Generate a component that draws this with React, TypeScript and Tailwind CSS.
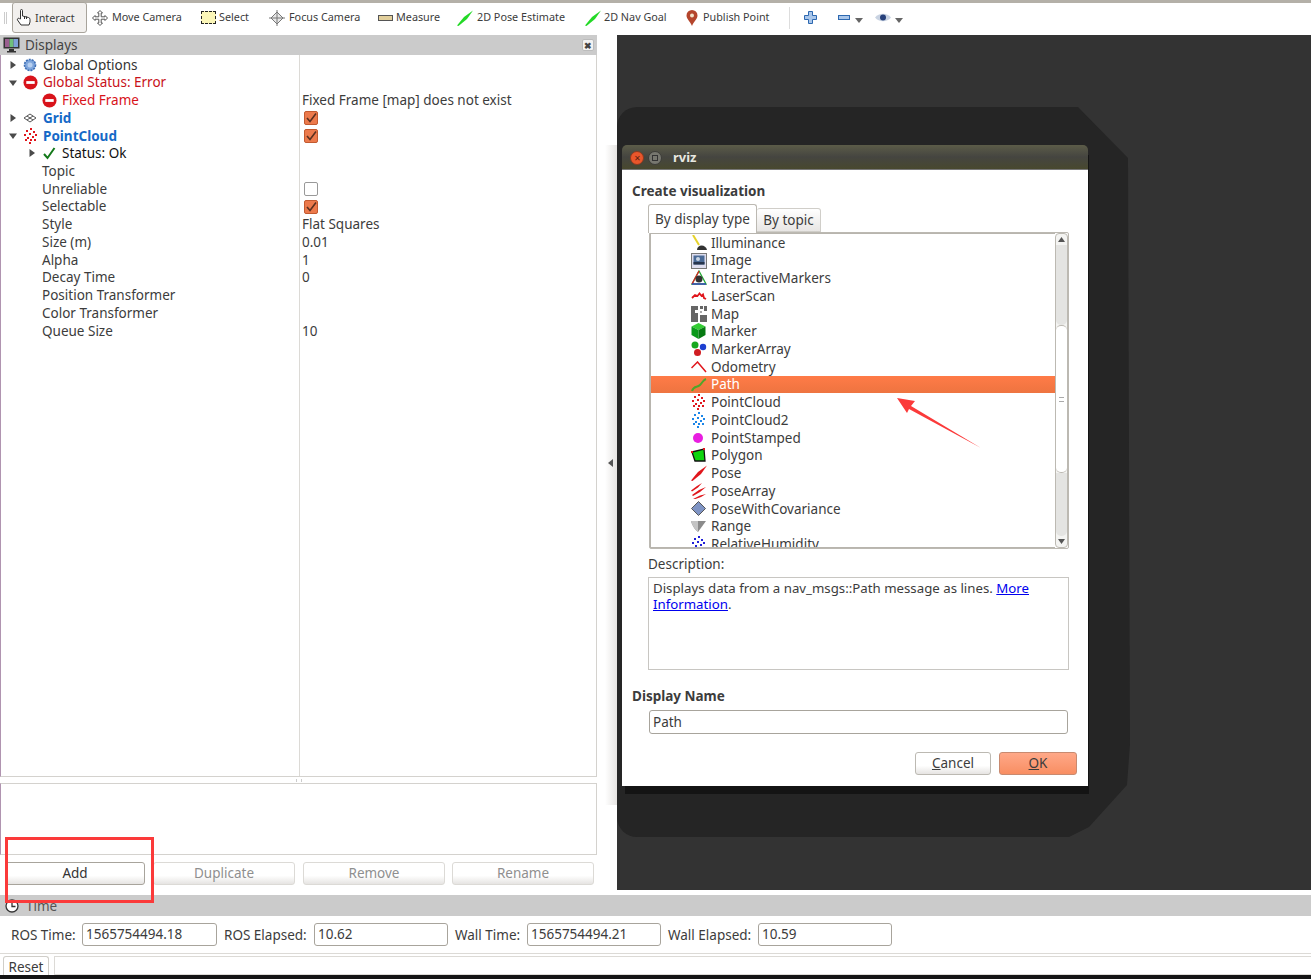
import React from "react";

const FONT = "font-['Noto_Sans',sans-serif]";

// ---- icons ----
function Dots({ color }: { color: string }) {
  const pts = [[8,1],[4,3],[11,4],[2,7],[7,6],[13,7],[5,10],[10,9],[3,12],[8,12],[12,12],[7,15]];
  return (
    <svg width="16" height="16" viewBox="0 0 16 16">
      {pts.map(([x, y], i) => <rect key={i} x={x - 1} y={y - 1} width="2" height="2" fill={color} />)}
    </svg>
  );
}

function StopIcon() {
  return (
    <svg width="15" height="15" viewBox="0 0 16 16">
      <circle cx="8" cy="8" r="7.5" fill="#d8131b" />
      <rect x="3.5" y="6.5" width="9" height="3" fill="#fff" />
    </svg>
  );
}

function GearIcon() {
  return (
    <svg width="14" height="14" viewBox="0 0 14 14">
      <circle cx="7" cy="7" r="5.5" fill="#7fa6dc" stroke="#3e6fb5" strokeWidth="1.6" strokeDasharray="2 1" />
      <circle cx="7" cy="7" r="2.5" fill="#b8d0f0" />
    </svg>
  );
}

function GridIcon() {
  return (
    <svg width="14" height="10" viewBox="0 0 14 10" fill="none" stroke="#555" strokeWidth="1">
      <path d="M7 1 13 5 7 9 1 5Z" />
      <path d="M4 3 10 7M10 3 4 7" />
    </svg>
  );
}

function CheckMark() {
  return (
    <svg width="14" height="14" viewBox="0 0 14 14" fill="none">
      <path d="M2 8 5.5 12 12.5 2" stroke="#14791a" strokeWidth="2" />
    </svg>
  );
}

function Arrow({ open }: { open?: boolean }) {
  return (
    <svg width="8" height="8" viewBox="0 0 8 8">
      <path d={open ? "M0 1.5H8L4 7Z" : "M1.5 0V8L7 4Z"} fill="#4a4a4a" />
    </svg>
  );
}

function OrangeCheck() {
  return (
    <div className="w-[14px] h-[14px] rounded-[2px] bg-[#ec7a4c] border border-[#c25a30] flex items-center justify-center">
      <svg width="12" height="12" viewBox="0 0 12 12" fill="none">
        <path d="M2 6 5 9.5 11 1.5" stroke="#5a3020" strokeWidth="1.6" />
      </svg>
    </div>
  );
}

function Slash({ color }: { color: string }) {
  return (
    <svg width="16" height="16" viewBox="0 0 16 16">
      <path d="M0 15.500 7 7 16 .5 10 9 1.500 16Z" fill={color} />
    </svg>
  );
}

// ---- toolbar ----
const HandIcon = () => (
  <svg width="16" height="18" viewBox="0 0 16 18" fill="none" stroke="#333" strokeWidth="1">
    <path d="M4.5 11V2.5a1 1 0 0 1 2 0V8l6 1.5a2 2 0 0 1 1.5 2V14l-1 3H5L1.5 12a1.2 1.2 0 0 1 2-1.3Z" fill="#fff" />
    <path d="M8.5 8v3M10.5 8.5V11" />
  </svg>
);
const MoveIcon = () => (
  <svg width="16" height="16" viewBox="0 0 16 16" fill="#fff" stroke="#555" strokeWidth="1">
    <path d="M8 .5 10.5 3H9.2V6.8H13V5.5L15.5 8 13 10.5V9.2H9.2V13h1.3L8 15.5 5.5 13h1.3V9.2H3v1.3L.5 8 3 5.5v1.3h3.8V3H5.500Z" />
  </svg>
);
const SelectIcon = () => (
  <div className="w-[15px] h-[13px] bg-[#fbf6b8] border border-dashed border-[#222]" />
);
const FocusIcon = () => (
  <svg width="16" height="16" viewBox="0 0 16 16" fill="none" stroke="#777" strokeWidth="1">
    <path d="M8 2 14 8 8 14 2 8Z" fill="#e8e8e8" />
    <path d="M8 0v16M0 8h16" />
  </svg>
);
const MeasureIcon = () => (
  <div className="w-[15px] h-[6px] bg-[#e2cf9b] border border-[#555]" />
);
const PinIcon = () => (
  <svg width="12" height="16" viewBox="0 0 12 16">
    <path d="M6 16C4 11 .5 9 .5 5.5a5.5 5.5 0 0 1 11 0C11.500 9 8 11 6 16Z" fill="#b4452c" />
    <circle cx="6" cy="5.500" r="2" fill="#f3e3c8" />
  </svg>
);
const Caret = () => (
  <svg width="8" height="5" viewBox="0 0 8 5"><path d="M0 0H8L4 5Z" fill="#666" /></svg>
);

function Tool({ icon, label, w, gap }: { icon: React.ReactNode; label: string; w: string; gap: string }) {
  return (
    <div className={`flex items-center h-full ${w} ${gap}`}>
      <span className="flex items-center justify-center w-[16px] shrink-0">{icon}</span>
      <span className="text-[10.800px] text-[#3c3c3c] whitespace-nowrap">{label}</span>
    </div>
  );
}

function Toolbar() {
  return (
    <div className="h-[35px] shrink-0 bg-white border-t-[3px] border-[#b4b0a8] flex items-center pl-[4px] pb-[3px]">
      <div className="w-[3px] h-[12px] mr-[5px] border-x border-[#ccc]" />
      <div className="w-[75px] h-[31px] -mt-[1px] rounded-[3px] border border-[#a8a49c] bg-[#f2f0ee] flex items-center pl-[3px] gap-[3px] mr-[5px]">
        <HandIcon />
        <span className="text-[10.800px] text-[#3c3c3c] mt-[2px]">Interact</span>
      </div>
      <Tool icon={<MoveIcon />} label="Move Camera" w="w-[108px]" gap="gap-[4px]" />
      <Tool icon={<SelectIcon />} label="Select" w="w-[69px]" gap="gap-[3px]" />
      <Tool icon={<FocusIcon />} label="Focus Camera" w="w-[108px]" gap="gap-[4px]" />
      <Tool icon={<MeasureIcon />} label="Measure" w="w-[80px]" gap="gap-[3px]" />
      <Tool icon={<Slash color="#23d926" />} label="2D Pose Estimate" w="w-[128px]" gap="gap-[4px]" />
      <Tool icon={<Slash color="#23d926" />} label="2D Nav Goal" w="w-[99px]" gap="gap-[3px]" />
      <Tool icon={<PinIcon />} label="Publish Point" w="w-[105px]" gap="gap-[3px]" />
      <div className="w-px h-[22px] bg-[#ddd] mr-[14px]" />
      <svg width="13" height="13" viewBox="0 0 13 13" className="mr-[21px]">
        <path d="M4.500 .5h4v4h4v4h-4v4h-4v-4h-4v-4h4Z" fill="#a9c6ea" stroke="#2d68b0" />
      </svg>
      <svg width="12" height="5" viewBox="0 0 12 5" className="mr-[5px]">
        <rect x=".5" y=".5" width="11" height="4" fill="#a9c6ea" stroke="#2d68b0" />
      </svg>
      <span className="mr-[12px] mt-[5px]"><Caret /></span>
      <svg width="16" height="11" viewBox="0 0 16 11" className="mr-[4px]">
        <path d="M0 5.500C4 .5 12 .5 16 5.500 12 10.500 4 10.500 0 5.500Z" fill="#c9d3e2" />
        <circle cx="8" cy="5.500" r="3" fill="#27407a" />
      </svg>
      <span className="mt-[5px]"><Caret /></span>
    </div>
  );
}

// ---- displays tree ----
type Row = {
  indent: string;
  arrow?: "open" | "closed";
  icon?: React.ReactNode;
  label: string;
  tone?: string;
  value?: string;
  check?: boolean;
  empty?: boolean;
};

const rows: Row[] = [
  { indent: "pl-[8px]", arrow: "closed", icon: <GearIcon />, label: "Global Options", tone: "text-[#333]" },
  { indent: "pl-[8px]", arrow: "open", icon: <StopIcon />, label: "Global Status: Error", tone: "text-[#c8121a]" },
  { indent: "pl-[41px]", icon: <StopIcon />, label: "Fixed Frame", tone: "text-[#d8131b]", value: "Fixed Frame [map] does not exist" },
  { indent: "pl-[8px]", arrow: "closed", icon: <GridIcon />, label: "Grid", tone: "text-[#1569c7] font-bold", check: true },
  { indent: "pl-[8px]", arrow: "open", icon: <Dots color="#e0161c" />, label: "PointCloud", tone: "text-[#1569c7] font-bold", check: true },
  { indent: "pl-[27px]", arrow: "closed", icon: <CheckMark />, label: "Status: Ok", tone: "text-[#111]" },
  { indent: "pl-[41px]", label: "Topic" },
  { indent: "pl-[41px]", label: "Unreliable", empty: true },
  { indent: "pl-[41px]", label: "Selectable", check: true },
  { indent: "pl-[41px]", label: "Style", value: "Flat Squares" },
  { indent: "pl-[41px]", label: "Size (m)", value: "0.01" },
  { indent: "pl-[41px]", label: "Alpha", value: "1" },
  { indent: "pl-[41px]", label: "Decay Time", value: "0" },
  { indent: "pl-[41px]", label: "Position Transformer" },
  { indent: "pl-[41px]", label: "Color Transformer" },
  { indent: "pl-[41px]", label: "Queue Size", value: "10" },
];

function TreeRow({ row }: { row: Row }) {
  return (
    <div className="flex h-[17.72px] items-center text-[13.500px] text-[#3c3c3c] whitespace-nowrap">
      <div className={`w-[299px] h-full flex items-center ${row.indent}`}>
        {row.arrow && (
          <span className="w-[14px] shrink-0 flex">
            <Arrow open={row.arrow === "open"} />
          </span>
        )}
        {row.icon && <span className="w-[20px] shrink-0 flex items-center justify-start">{row.icon}</span>}
        <span className={row.tone}>{row.label}</span>
      </div>
      <div className="pl-[2px] flex items-center">
        {row.value}
        {row.check && <span className="ml-[2px]"><OrangeCheck /></span>}
        {row.empty && <span className="ml-[2px] w-[14px] h-[14px] rounded-[2px] border border-[#999] bg-white" />}
      </div>
    </div>
  );
}

function ActionButton({ label, disabled, w }: { label: string; disabled?: boolean; w: string }) {
  return (
    <div
      className={`${w} h-[23px] rounded-[3px] border flex items-center justify-center text-[13.500px] bg-gradient-to-b from-white from-60% to-[#e6e4e2] ${
        disabled ? "border-[#dcdad6] text-[#8f8f8f]" : "border-[#a8a49c] text-[#333]"
      }`}
    >
      {label}
    </div>
  );
}

function DisplaysPanel() {
  return (
    <div className="w-[597px] shrink-0 flex flex-col">
      <div className="h-[20px] shrink-0 bg-[#cbcbcb] flex items-center pl-[3px] text-[13.500px] text-[#444]">
        <svg width="17" height="16" viewBox="0 0 17 16" className="mr-[5px]">
          <rect x=".5" y=".5" width="16" height="11" fill="#333" />
          <rect x="2" y="2" width="4.500" height="8" fill="#9a5f8f" />
          <rect x="6.500" y="2" width="4" height="8" fill="#6fbf7b" />
          <rect x="10.500" y="2" width="4.500" height="8" fill="#7fa0d8" />
          <rect x="6" y="12" width="5" height="2" fill="#333" />
          <rect x="4" y="14" width="9" height="1.500" fill="#333" />
        </svg>
        Displays
        <div className="ml-auto mr-[3px] w-[12px] h-[12px] rounded-[2px] bg-[#f2f2f2] border border-[#bbb] flex items-center justify-center text-[9px] leading-none font-bold text-[#444]">
          ✖
        </div>
      </div>
      <div className="h-[722px] shrink-0 border-r border-b border-[#d4d2ce] relative flex flex-col pt-[1px] border-l border-l-[#b094b0]">
        <div className="absolute left-[298px] top-0 bottom-0 w-px bg-[#dcdad6]" />
        {rows.map((r) => <TreeRow key={r.label} row={r} />)}
      </div>
      <div className="h-[6px] shrink-0 flex justify-center items-center">
        <div className="w-[6px] h-[3px] border-x border-[#ccc]" />
      </div>
      <div className="h-[72px] shrink-0 border border-[#d4d2ce] border-l-[#b094b0] bg-white" />
      <div className="flex pt-[7px] pl-[5px] gap-[8px]">
        <ActionButton label="Add" w="w-[140px]" />
        <ActionButton label="Duplicate" disabled w="w-[142px]" />
        <ActionButton label="Remove" disabled w="w-[142px]" />
        <ActionButton label="Rename" disabled w="w-[142px] -ml-px" />
      </div>
    </div>
  );
}

// ---- dialog ----
const Illuminance = () => (
  <svg width="16" height="16" viewBox="0 0 16 16">
    <path d="M2 0 8 10" stroke="#e6d22a" strokeWidth="2" />
    <path d="M6 15C6 9 15 9 16 15Z" fill="#333" />
  </svg>
);
const ImageIcon = () => (
  <svg width="16" height="16" viewBox="0 0 16 16">
    <rect x=".5" y=".5" width="15" height="15" fill="#dde" stroke="#777" />
    <rect x="2.500" y="2.500" width="11" height="9" fill="#4a6a96" />
    <circle cx="7" cy="6" r="2" fill="#c9d6e6" />
    <rect x="2.500" y="9" width="11" height="2.500" fill="#26344c" />
  </svg>
);
const Interactive = () => (
  <svg width="16" height="16" viewBox="0 0 16 16" fill="none">
    <path d="M8 1 15 14H1Z" stroke="#22aa33" strokeWidth="1.300" />
    <path d="M8 1 1 14" stroke="#d22" strokeWidth="1.300" />
    <path d="M1 14H15" stroke="#33c" strokeWidth="1.300" />
    <circle cx="8" cy="9" r="3.500" fill="#333" />
  </svg>
);
const Laser = () => (
  <svg width="16" height="16" viewBox="0 0 16 16" fill="none">
    <path d="M1 10 4 7 6.500 8 8.500 5.500 10.500 8 12 6.500 13 10 15 11" stroke="#e0161c" strokeWidth="1.800" />
  </svg>
);
const MapIcon = () => (
  <svg width="16" height="16" viewBox="0 0 16 16" fill="#666">
    <path d="M0 0h7v4H4v3h3v9H0ZM9 0h3v3H9ZM13 0h3v5h-3ZM9 9h7v7H9Z" />
    <path d="M9 5h2v2H9Z" fill="#aaa" />
  </svg>
);
const Cube = () => (
  <svg width="15" height="16" viewBox="0 0 15 16">
    <path d="M7.500 0 14.500 3.500 7.500 7 .5 3.500Z" fill="#33cc33" />
    <path d="M.5 3.500 7.500 7V16L.5 12Z" fill="#0a9a1a" />
    <path d="M14.500 3.500 7.500 7V16L14.500 12Z" fill="#067a12" />
  </svg>
);
const MarkerArray = () => (
  <svg width="16" height="16" viewBox="0 0 16 16">
    <circle cx="4" cy="4" r="3.500" fill="#16a81e" />
    <circle cx="12" cy="6" r="3.200" fill="#1d3fd0" />
    <circle cx="6.500" cy="11.500" r="3.500" fill="#d01d22" />
  </svg>
);
const Odometry = () => (
  <svg width="16" height="12" viewBox="0 0 16 12" fill="none">
    <path d="M.5 7 6.500 1 15 11" stroke="#e0161c" strokeWidth="1.500" />
  </svg>
);
const PathIcon = () => (
  <svg width="16" height="14" viewBox="0 0 16 14" fill="none">
    <path d="M1 13C3 7 6 10 9 7S12 2 15 1" stroke="#4fa52a" strokeWidth="2" />
  </svg>
);
const Polygon = () => (
  <svg width="15" height="15" viewBox="0 0 15 15">
    <path d="M1 4 13 1 14 13 4 13Z" fill="#0ed40e" stroke="#111" strokeWidth="1.300" />
    <rect x="0" y="3" width="2" height="2" fill="#e0161c" />
    <rect x="12" y="0" width="2" height="2" fill="#e0161c" />
  </svg>
);
const PoseArray = () => (
  <svg width="16" height="16" viewBox="0 0 16 16" fill="#e0161c">
    <path d="M0 7.500 6 3 11 0 7 4.500 1 8.500ZM1 12 8 7 15 4 9 9 2 13ZM2 16 9 12.500 15 11 10 14 3 16.500Z" />
  </svg>
);
const Covariance = () => (
  <svg width="15" height="15" viewBox="0 0 15 15">
    <path d="M7.500 .5 14.500 7.500 7.500 14.500 .5 7.500Z" fill="#7f94c4" stroke="#555" />
  </svg>
);
const RangeIcon = () => (
  <svg width="15" height="12" viewBox="0 0 15 12">
    <path d="M0 1H15L7 12C4 10 1 5 0 1Z" fill="#8b8b8b" />
    <path d="M0 1H7L7 12C4 10 1 5 0 1Z" fill="#c4c4c4" />
  </svg>
);

const displayTypes: { name: string; icon: React.ReactNode }[] = [
  { name: "Illuminance", icon: <Illuminance /> },
  { name: "Image", icon: <ImageIcon /> },
  { name: "InteractiveMarkers", icon: <Interactive /> },
  { name: "LaserScan", icon: <Laser /> },
  { name: "Map", icon: <MapIcon /> },
  { name: "Marker", icon: <Cube /> },
  { name: "MarkerArray", icon: <MarkerArray /> },
  { name: "Odometry", icon: <Odometry /> },
  { name: "Path", icon: <PathIcon /> },
  { name: "PointCloud", icon: <Dots color="#e0161c" /> },
  { name: "PointCloud2", icon: <Dots color="#1c86e8" /> },
  { name: "PointStamped", icon: <span className="block ml-[2px] w-[10px] h-[10px] rounded-full bg-[#e81ee0]" /> },
  { name: "Polygon", icon: <Polygon /> },
  { name: "Pose", icon: <Slash color="#e0161c" /> },
  { name: "PoseArray", icon: <PoseArray /> },
  { name: "PoseWithCovariance", icon: <Covariance /> },
  { name: "Range", icon: <RangeIcon /> },
  { name: "RelativeHumidity", icon: <Dots color="#2020d8" /> },
];

function Dialog() {
  return (
    <div className="absolute left-[5px] top-[110px] w-[466px] h-[641px] shadow-[2px_9px_0_-1px_#141414] text-[#3c3c3c]">
      <div className="h-[25px] rounded-t-[5px] bg-gradient-to-b from-[#5c5c48] via-[#454540] to-[#48482e] border-b border-[#777] flex items-center pl-[8px] pt-[2px]">
        <span className="w-[14px] h-[14px] rounded-full bg-[#e9562b] border border-[#8a3a1f] flex items-center justify-center text-[8px] leading-none text-[#5a2010]">✕</span>
        <span className="ml-[4px] w-[14px] h-[14px] rounded-full bg-[#77776f] border border-[#3c3c38] flex items-center justify-center">
          <span className="block w-[6px] h-[6px] border border-[#333]" />
        </span>
        <span className="ml-[11px] text-[13px] font-bold text-[#e8e8e0]">rviz</span>
      </div>
      <div className="h-[616px] bg-white flex flex-col pl-[10px] pr-[11px] text-[13.500px]">
        <div className="h-[19px] mt-[12px] font-bold leading-[19px]">Create visualization</div>
        <div className="flex items-end h-[29px] ml-[16px] mt-[2px]">
          <div className="w-[109px] h-[29px] -mb-px z-10 bg-white rounded-t-[3px] border border-b-0 border-[#bcb9b2] flex items-center justify-center pt-[1px]">By display type</div>
          <div className="w-[64px] h-[24px] rounded-t-[3px] border border-[#d0cec9] border-l-0 bg-gradient-to-b from-white to-[#e8e6e4] flex items-center justify-center">By topic</div>
        </div>
        <div className="ml-[17px] h-[317px] w-[420px] border border-[#bcb9b2] rounded-[2px] flex shrink-0">
          <div className="flex-1 h-full overflow-hidden border border-[#b8b5ae] border-r-0">
            {displayTypes.map((d) => (
              <div
                key={d.name}
                className={`flex items-center h-[17.72px] pl-[40px] whitespace-nowrap ${
                  d.name === "Path" ? "bg-gradient-to-b from-[#ff7b47] to-[#ee7440] text-white" : ""
                }`}
              >
                <span className="w-[20px] shrink-0 flex items-center justify-start">{d.icon}</span>
                {d.name}
              </div>
            ))}
          </div>
          <div className="w-[13px] h-full border border-[#bcb9b2] rounded-[4px] flex flex-col items-center bg-[#f4f4f2]">
            <svg width="7" height="5" viewBox="0 0 7 5" className="mt-[3px]"><path d="M0 5H7L3.500 0Z" fill="#555" /></svg>
            <div className="mt-[3px] w-full h-[80px] bg-[#e4e4e2] rounded-b-[5px]" />
            <div className="w-full h-[148px] bg-white border-y border-[#bcb9b2] rounded-[5px] flex items-center justify-center">
              <span className="block w-[5px] h-[5px] border-y border-[#aaa]" />
            </div>
            <div className="w-full flex-1 bg-[#e4e4e2] rounded-b-[5px]" />
            <svg width="7" height="5" viewBox="0 0 7 5" className="my-[3px]"><path d="M0 0H7L3.500 5Z" fill="#555" /></svg>
          </div>
        </div>
        <div className="ml-[16px] mt-[6px] h-[18px] leading-[18px]">Description:</div>
        <div className="ml-[16px] mt-[4px] h-[93px] w-[421px] border border-[#c8c6c2] px-[4px] py-[3px] leading-[15.500px] text-[13.250px] shrink-0">
          Displays data from a nav_msgs::Path message as lines.{" "}
          <span className="text-[#0000ee] underline">More</span>{" "}
          <span className="text-[#0000ee] underline">Information</span>.
        </div>
        <div className="mt-[17px] h-[18px] leading-[18px] font-bold">Display Name</div>
        <div className="ml-[17px] mt-[5px] h-[24px] w-[419px] rounded-[3px] border border-[#a8a49c] pl-[3px] flex items-center shrink-0">Path</div>
        <div className="flex justify-end gap-[8px] mt-[18px]">
          <div className="w-[76px] h-[23px] rounded-[3px] border border-[#bcb9b2] bg-gradient-to-b from-white from-60% to-[#e6e4e2] flex items-center justify-center">
            <span><span className="underline">C</span>ancel</span>
          </div>
          <div className="w-[78px] h-[23px] rounded-[3px] border border-[#c88a70] bg-gradient-to-b from-[#ffa888] to-[#f88e62] flex items-center justify-center">
            <span><span className="underline">O</span>K</span>
          </div>
        </div>
      </div>
    </div>
  );
}

function Viewport() {
  return (
    <div className="flex-1 bg-[#333333] relative overflow-hidden">
      <div className="absolute left-0 top-[72px] w-[513px] h-[730px] bg-[#252525] rounded-l-[20px] [clip-path:polygon(0_0,461px_0,511px_51px,513px_637px,510px_678px,472px_720px,452px_730px,0_730px)]" />
      <Dialog />
    </div>
  );
}

// ---- time panel ----
function TimeField({ label, value, w, inputW }: { label: string; value: string; w: string; inputW: string }) {
  return (
    <div className={`flex items-center ${w}`}>
      <span className="whitespace-nowrap mt-[1px]">{label}</span>
      <div className={`${inputW} ml-auto h-[23px] rounded-[3px] border border-[#a8a49c] bg-white pl-[3px] flex items-center`}>{value}</div>
    </div>
  );
}

function TimePanel() {
  return (
    <div className="shrink-0 flex flex-col text-[13.500px] text-[#3c3c3c]">
      <div className="h-[5px] bg-white" />
      <div className="h-[21px] bg-[#cbcbcb] flex items-center pl-[5px] pt-[1px] text-[#555]">
        <svg width="14" height="14" viewBox="0 0 14 14" fill="none" stroke="#333" strokeWidth="1.300" className="mr-[7px]">
          <circle cx="7" cy="7" r="6" fill="#fff" />
          <path d="M7 3.500V7.500H10.500" />
        </svg>
        Time
      </div>
      <div className="h-[38px] flex items-center pl-[11px] gap-[7px] border-b border-[#dcdad6]">
        <TimeField label="ROS Time:" value="1565754494.18" w="w-[206px]" inputW="w-[135px]" />
        <TimeField label="ROS Elapsed:" value="10.62" w="w-[224px]" inputW="w-[134px]" />
        <TimeField label="Wall Time:" value="1565754494.21" w="w-[206px]" inputW="w-[134px]" />
        <TimeField label="Wall Elapsed:" value="10.59" w="w-[224px]" inputW="w-[134px]" />
      </div>
      <div className="h-[21px] flex pl-[3px] pt-[2px] gap-[5px]">
        <div className="w-[46px] h-[19px] rounded-t-[3px] border border-[#d0cec9] border-b-0 flex items-center justify-center pt-[2px]">Reset</div>
        <div className="flex-1 border border-[#dcdad6] border-r-0" />
      </div>
    </div>
  );
}

export default function App() {
  return (
    <div className={`${FONT} w-[1311px] h-[979px] bg-white flex flex-col overflow-hidden relative`}>
      <Toolbar />
      <div className="h-[855px] shrink-0 flex">
        <DisplaysPanel />
        <div className="w-[20px] shrink-0 flex items-center justify-center relative">
          {/* faint window shadow bleeding past the viewport edge */}
          <div className="absolute right-0 top-[110px] h-[660px] w-[12px] bg-gradient-to-r from-transparent to-[#e6e4e2]" />
          <svg width="5" height="8" viewBox="0 0 5 8" className="ml-[7px] relative"><path d="M5 0V8L0 4Z" fill="#555" /></svg>
        </div>
        <Viewport />
      </div>
      <TimePanel />
      <div className="flex-1 bg-[#141414]" />

      {/* red annotation box around Add */}
      <div className="absolute left-[5px] top-[837px] w-[149px] h-[66px] border-[3px] border-[#fb3a3a]" />
      {/* red annotation arrow */}
      <svg width="90" height="56" viewBox="0 0 90 56" className="absolute left-[895px] top-[396px]">
        <path d="M2 2 20 5 16 10 86 52 14 13 12 17Z" fill="#fb3a3a" />
      </svg>
    </div>
  );
}
